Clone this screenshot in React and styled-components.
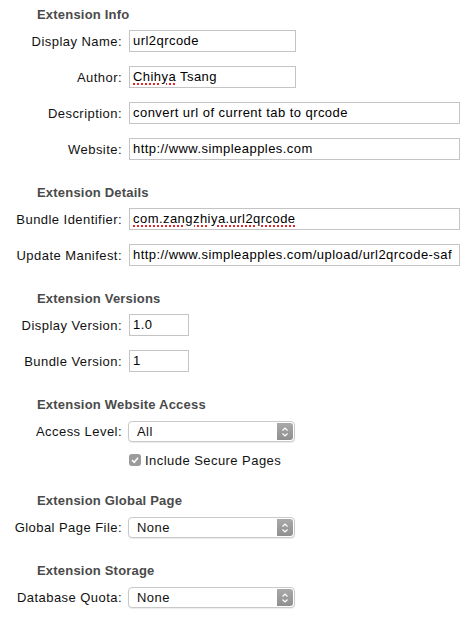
import React from "react";
import styled, { createGlobalStyle } from "styled-components";

const GlobalStyle = createGlobalStyle`
  html, body {
    margin: 0;
    padding: 0;
    background: #ffffff;
  }
  body {
    font-family: "Liberation Sans", Arial, sans-serif;
    font-size: 13px;
    letter-spacing: 0.45px;
    color: #000;
  }
`;

const Page = styled.div`
  width: 469px;
  height: 620px;
  padding-top: 7px;
  box-sizing: border-box;
  display: flex;
  flex-direction: column;
  gap: 25px;
  overflow: hidden;
`;

const Section = styled.section`
  display: flex;
  flex-direction: column;
`;

const Heading = styled.h2`
  margin: 0 0 ${(p) => (p.$tight ? 8 : 7)}px 37px;
  font-size: 13px;
  line-height: 16px;
  height: 16px;
  font-weight: bold;
  letter-spacing: 0.2px;
  color: #4a4a4a;
`;

const Grid = styled.div`
  display: grid;
  grid-template-columns: 122px 1fr;
  column-gap: 7px;
  row-gap: ${(p) => p.$gap ?? 14}px;
  align-items: center;
`;

const Label = styled.label`
  text-align: right;
  white-space: nowrap;
  font-size: 13px;
  color: #111;
`;

const Field = styled.div`
  box-sizing: border-box;
  width: ${(p) => p.$width}px;
  height: 22px;
  border: 1px solid #c4c4c4;
  background: #fff;
  padding: 0 3px;
  line-height: 20px;
  font-size: 13px;
  white-space: nowrap;
  overflow: hidden;
  color: #000;
`;

const Misspelled = styled.span`
  text-decoration: underline dotted #e0292b;
  text-decoration-thickness: 2px;
  text-underline-offset: 2px;
`;

const Select = styled.div`
  box-sizing: border-box;
  width: 167px;
  height: 21px;
  margin-left: -1px;
  border: 1px solid #c9c9c9;
  border-radius: 4px;
  background: #fff;
  box-shadow: 0 1px 1px rgba(0, 0, 0, 0.08);
  display: flex;
  align-items: center;
  overflow: hidden;
`;

const SelectText = styled.span`
  flex: 1;
  padding-left: 8px;
  font-size: 13px;
  color: #111;
`;

const Stepper = styled.span`
  width: 16px;
  align-self: stretch;
  margin: 1px;
  border-radius: 0 3px 3px 0;
  background: linear-gradient(#a9a9a9, #8f8f8f);
  display: flex;
  align-items: center;
  justify-content: center;
`;

const CheckRow = styled.div`
  grid-column: 2;
  display: flex;
  align-items: center;
  gap: 4px;
  height: 16px;
  margin-top: -2px;
  font-size: 13px;
  color: #111;
`;

const CheckBox = styled.span`
  width: 12px;
  height: 12px;
  border-radius: 3px;
  background: #9b9b9b;
  display: flex;
  align-items: center;
  justify-content: center;
`;

const Chevrons = () => (
  <svg width="8" height="12" viewBox="0 0 8 12">
    <path d="M1.5 4.5 L4 2 L6.5 4.5 M1.5 7.5 L4 10 L6.5 7.5" fill="none" stroke="#fff" strokeWidth="1.2" />
  </svg>
);

const Check = () => (
  <svg width="10" height="10" viewBox="0 0 10 10">
    <path d="M2 5.2 L4.2 7.3 L8 2.8" fill="none" stroke="#fff" strokeWidth="1.6" />
  </svg>
);

const Dropdown = ({ value }) => (
  <Select>
    <SelectText>{value}</SelectText>
    <Stepper>
      <Chevrons />
    </Stepper>
  </Select>
);

export default function App() {
  return (
    <>
      <GlobalStyle />
      <Page>
        <Section>
          <Heading>Extension Info</Heading>
          <Grid>
            <Label>Display Name:</Label>
            <Field $width={167}>url2qrcode</Field>
            <Label>Author:</Label>
            <Field $width={167}>
              <Misspelled>Chihya</Misspelled> Tsang
            </Field>
            <Label>Description:</Label>
            <Field $width={331}>convert url of current tab to qrcode</Field>
            <Label>Website:</Label>
            <Field $width={331}>http://www.simpleapples.com</Field>
          </Grid>
        </Section>

        <Section>
          <Heading>Extension Details</Heading>
          <Grid>
            <Label>Bundle Identifier:</Label>
            <Field $width={331}>
              <Misspelled>com.zangzhiya.url2qrcode</Misspelled>
            </Field>
            <Label>Update Manifest:</Label>
            <Field $width={331}>http://www.simpleapples.com/upload/url2qrcode-saf</Field>
          </Grid>
        </Section>

        <Section>
          <Heading>Extension Versions</Heading>
          <Grid>
            <Label>Display Version:</Label>
            <Field $width={60}>1.0</Field>
            <Label>Bundle Version:</Label>
            <Field $width={60}>1</Field>
          </Grid>
        </Section>

        <Section>
          <Heading $tight>Extension Website Access</Heading>
          <Grid $gap={12}>
            <Label>Access Level:</Label>
            <Dropdown value="All" />
            <CheckRow>
              <CheckBox>
                <Check />
              </CheckBox>
              Include Secure Pages
            </CheckRow>
          </Grid>
        </Section>

        <Section>
          <Heading $tight>Extension Global Page</Heading>
          <Grid>
            <Label>Global Page File:</Label>
            <Dropdown value="None" />
          </Grid>
        </Section>

        <Section>
          <Heading $tight>Extension Storage</Heading>
          <Grid>
            <Label>Database Quota:</Label>
            <Dropdown value="None" />
          </Grid>
        </Section>
      </Page>
    </>
  );
}
